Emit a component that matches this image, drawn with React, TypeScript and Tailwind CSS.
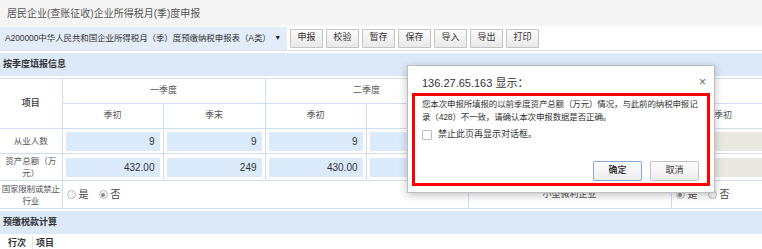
import React from 'react';

const FONT = "font-['Liberation_Sans','Noto_Sans_CJK_SC',sans-serif]";

const TOOL_BUTTONS = ['申报', '校验', '暂存', '保存', '导入', '导出', '打印'];

type Cell = { value: string; disabled?: boolean };

const ROWS: { label: React.ReactNode; cells: Cell[]; tall?: boolean }[] = [
  {
    label: '从业人数',
    cells: [
      { value: '9' }, { value: '9' }, { value: '9' }, { value: '' },
      { value: '' }, { value: '' }, { value: '', disabled: true }, { value: '', disabled: true },
    ],
  },
  {
    label: (
      <>
        资产总额（万
        <br />
        元）
      </>
    ),
    tall: true,
    cells: [
      { value: '432.00' }, { value: '249' }, { value: '430.00' }, { value: '' },
      { value: '' }, { value: '' }, { value: '', disabled: true }, { value: '', disabled: true },
    ],
  },
];

const COLS = ['w-[101px]', 'w-[102px]', 'w-[101px]', 'w-[102px]', 'w-[101px]', 'w-[102px]', 'w-[104px]', 'w-[106px]'];

function Radio({ checked }: { checked?: boolean }) {
  return (
    <span className="w-[9px] h-[9px] rounded-full border border-[#bdbdbd] bg-[#f4f4f4] flex items-center justify-center">
      {checked && <span className="w-[4px] h-[4px] rounded-full bg-[#8a8a8a]" />}
    </span>
  );
}

function YesNo({ yes }: { yes: boolean }) {
  return (
    <div className="flex items-center pl-[4px] text-[10px] text-[#444]">
      <Radio checked={yes} />
      <span className="ml-[3px]">是</span>
      <span className="ml-[10px]"><Radio checked={!yes} /></span>
      <span className="ml-[3px]">否</span>
    </div>
  );
}

const td = 'border border-[#cfdff0] p-0';

export default function App() {
  return (
    <div className={`relative w-[762px] h-[249px] overflow-hidden bg-white ${FONT}`}>
      {/* page title */}
      <div className="h-[26px] bg-[#f5f5f5] flex items-center pl-[7px] text-[10px] text-[#555]">
        居民企业(查账征收)企业所得税月(季)度申报
      </div>

      {/* toolbar */}
      <div className="h-[25px] flex items-stretch border-b border-[#dedede]">
        <div className="w-[287px] mt-[1px] bg-[#e2edf9] flex items-center justify-between pl-[5px] pr-[6px] text-[8.5px] text-[#333] whitespace-nowrap tracking-[-0.1px]">
          <span>A200000中华人民共和国企业所得税月（季）度预缴纳税申报表（A类）</span>
          <span className="text-[7px] text-[#222]">▼</span>
        </div>
        <div className="flex items-center gap-[3px] ml-[3px]">
          {TOOL_BUTTONS.map(b => (
            <button
              key={b}
              className="w-[33px] h-[19px] border border-[#c4c4c4] rounded-[1px] bg-gradient-to-b from-[#fbfbfb] to-[#e9e9e9] text-[9px] text-[#333] flex items-center justify-center"
            >
              {b}
            </button>
          ))}
        </div>
      </div>

      <div className="mt-[2px] h-[23px] bg-[#dce9f8] flex items-center pl-[3px] text-[9px] font-bold text-[#333]">
        按季度填报信息
      </div>

      {/* quarterly table */}
      <div className="mt-[2px] w-[762px] overflow-hidden">
        <table className="table-fixed border-collapse w-[881px] text-[9px] text-[#555]">
          <colgroup>
            <col className="w-[62px]" />
            {COLS.map((c, i) => (
              <col key={i} className={c} />
            ))}
          </colgroup>
          <tbody>
            <tr className="h-[25px]">
              <td rowSpan={2} className={`${td} border-l-0 text-center text-[#333] font-medium`}>项目</td>
              {['一季度', '二季度', '三季度', '四季度'].map(q => (
                <td key={q} colSpan={2} className={`${td} text-center`}>{q}</td>
              ))}
            </tr>
            <tr className="h-[25px]">
              {COLS.map((_, i) => (
                <td key={i} className={`${td} text-center`}>{i % 2 === 0 ? '季初' : '季末'}</td>
              ))}
            </tr>
            {ROWS.map((row, ri) => (
              <tr key={ri} className={row.tall ? 'h-[27px]' : 'h-[25px]'}>
                <td className={`${td} border-l-0 text-center leading-[12px] text-[8.5px] whitespace-nowrap`}>{row.label}</td>
                {row.cells.map((c, ci) => (
                  <td key={ci} className={td}>
                    <div
                      className={`mx-[3px] h-[19px] flex items-center justify-end pr-[5px] text-[10px] text-[#333] ${
                        c.disabled ? 'bg-[#e9e8e1]' : 'bg-[#dcebfc]'
                      }`}
                    >
                      {c.value}
                    </div>
                  </td>
                ))}
              </tr>
            ))}
            <tr className="h-[28px]">
              <td className={`${td} border-l-0 text-center leading-[12px] text-[8.5px] whitespace-nowrap tracking-[-0.2px]`}>
                国家限制或禁止
                <br />
                行业
              </td>
              <td colSpan={4} className={td}>
                <YesNo yes={false} />
              </td>
              <td colSpan={2} className={`${td} text-center`}>小型微利企业</td>
              <td colSpan={2} className={td}>
                <YesNo yes />
              </td>
            </tr>
          </tbody>
        </table>
      </div>

      <div className="mt-[2px] h-[23px] bg-[#dce9f8] flex items-center pl-[3px] text-[9px] font-bold text-[#333]">
        预缴税款计算
      </div>
      <div className="flex h-[20px] items-center text-[9px] font-bold text-[#333]">
        <span className="w-[33px] pl-[8px] border-r border-[#e3e3e3]">行次</span>
        <span className="pl-[3px]">项目</span>
      </div>

      {/* browser alert dialog */}
      <div className="absolute left-[407px] top-[65px] w-[308px] h-[128px] bg-white border border-[#bfbfbf] shadow-[0_2px_8px_rgba(0,0,0,0.25)] flex flex-col pl-[14px]">
        <div className="flex items-start justify-between mt-[9px]">
          <span className="text-[11px] text-[#333] leading-[16px]">136.27.65.163 显示：</span>
          <span className="mr-[8px] mt-[-2px] text-[12px] text-[#666]">×</span>
        </div>
        <p className="mt-[7px] pr-[14px] text-[8.5px] text-[#333] leading-[13px] tracking-[-0.15px]">
          您本次申报所填报的以前季度资产总额（万元）情况，与此前的纳税申报记录（428）不一致，请确认本次申报数据是否正确。
        </p>
        <div className="mt-[4px] flex items-center text-[9px] text-[#333]">
          <span className="w-[10px] h-[10px] border border-[#bdbdbd] rounded-[1px] bg-white" />
          <span className="ml-[6px]">禁止此页再显示对话框。</span>
        </div>
        <div className="mt-[19px] mr-[15px] flex justify-end gap-[8px]">
          <button className="w-[49px] h-[20px] border border-[#86a9d6] rounded-[2px] bg-gradient-to-b from-[#fdfdfd] to-[#ececec] text-[9px] font-medium text-[#222]">
            确定
          </button>
          <button className="w-[49px] h-[20px] border border-[#c4c4c4] rounded-[2px] bg-gradient-to-b from-[#fdfdfd] to-[#ececec] text-[9px] text-[#333]">
            取消
          </button>
        </div>

        {/* red annotation box */}
        <div className="absolute left-[4px] top-[27px] w-[298px] h-[93px] border-[3px] border-[#ff0000]" />
      </div>
    </div>
  );
}
